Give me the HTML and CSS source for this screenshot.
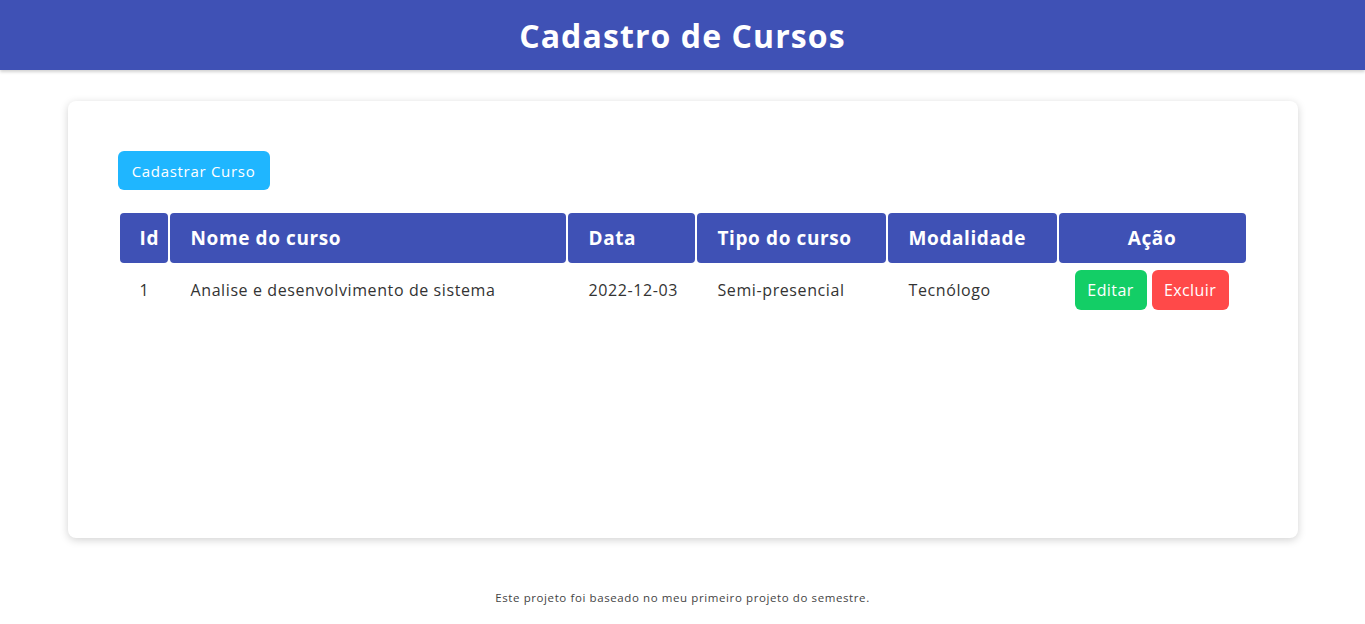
FILE: index.html
```html
<!DOCTYPE html>
<html lang="pt-BR">
<head>
<meta charset="utf-8">
<title>Cadastro de Cursos</title>
<link rel="stylesheet" href="styles.css">
</head>
<body>
<header class="topbar">
  <h1 class="title">Cadastro de Cursos</h1>
</header>
<main class="card">
  <button class="btn btn-primary">Cadastrar Curso</button>
  <table class="grid">
    <colgroup>
      <col class="c-id"><col class="c-nome"><col class="c-data"><col class="c-tipo"><col class="c-mod"><col class="c-acao">
    </colgroup>
    <thead>
      <tr>
        <th>Id</th>
        <th>Nome do curso</th>
        <th>Data</th>
        <th>Tipo do curso</th>
        <th>Modalidade</th>
        <th class="center">Ação</th>
      </tr>
    </thead>
    <tbody>
      <tr>
        <td>1</td>
        <td>Analise e desenvolvimento de sistema</td>
        <td>2022-12-03</td>
        <td>Semi-presencial</td>
        <td>Tecnólogo</td>
        <td class="actions">
          <button class="btn btn-success">Editar</button><button class="btn btn-danger">Excluir</button>
        </td>
      </tr>
    </tbody>
  </table>
</main>
<footer class="foot">Este projeto foi baseado no meu primeiro projeto do semestre.</footer>
</body>
</html>
```
FILE: styles.css
```css
* { box-sizing: border-box; }
body {
  margin: 0;
  font-family: "Open Sans", "Noto Sans", sans-serif;
  color: #333;
  background: #fff;
}
.topbar {
  height: 70px;
  background: #3f51b5;
  box-shadow: 0 2px 3px rgba(0,0,0,0.18);
  display: flex;
  align-items: center;
  justify-content: center;
}
.title {
  margin: 0;
  color: #fff;
  font-size: 32px;
  font-weight: 700;
  letter-spacing: 1.1px;
}
.card {
  width: 1230px;
  margin: 31px auto 0;
  min-height: 437px;
  padding: 50px 49px 50px 50px;
  background: #fff;
  border-radius: 8px;
  box-shadow: 0 2px 8px rgba(0,0,0,0.18);
}
.btn {
  border: 0;
  border-radius: 6px;
  color: #fff;
  font-family: inherit;
  font-size: 15px;
  cursor: pointer;
}
.btn-primary {
  background: #1fb6ff;
  height: 39px;
  padding: 0;
  width: 152px;
  letter-spacing: 0.7px;
}
.btn-success { background: #13ce66; width: 72px; }
.btn-danger { background: #ff4949; width: 77px; margin-left: 5px; }
.btn-success, .btn-danger {
  height: 40px;
  padding: 0;
  font-size: 16px;
  letter-spacing: 0.4px;
  vertical-align: middle;
}
.grid {
  margin-top: 21px;
  width: 1130px;
  border-collapse: separate;
  border-spacing: 2px;
  table-layout: fixed;
}
.c-id { width: 48px; }
.c-nome { width: 396px; }
.c-data { width: 127px; }
.c-tipo { width: 189px; }
.c-mod { width: 169px; }
.c-acao { width: 187px; }
.grid th {
  background: #3f51b5;
  color: #fff;
  height: 50px;
  padding: 0 0 0 21px;
  text-align: left;
  font-size: 19px;
  font-weight: 700;
  letter-spacing: 0.6px;
  border-radius: 4px;
}
.grid th:first-child { padding-left: 20px; }
.grid th.center { text-align: center; padding: 0; }
.grid td {
  height: 50px;
  padding: 0 0 0 21px;
  font-size: 16px;
  letter-spacing: 0.6px;
  color: #333;
}
.grid td:first-child { padding-left: 20px; }
.grid td.actions {
  padding: 0 0 0 16px;
  white-space: nowrap;
}
.foot {
  margin-top: 52px;
  text-align: center;
  font-size: 11.5px;
  color: #444;
  letter-spacing: 0.6px;
}
```
